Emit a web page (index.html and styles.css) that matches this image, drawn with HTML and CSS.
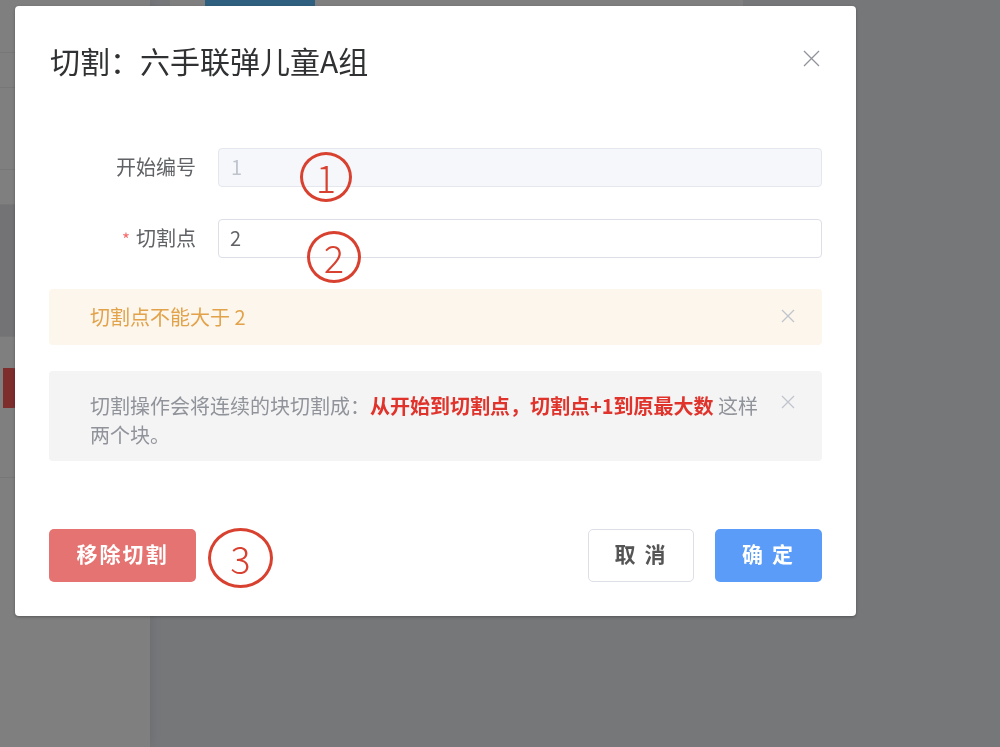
FILE: index.html
```html
<!DOCTYPE html>
<html>
<head>
  <meta charset="utf-8">
  <title>切割</title>
  <link rel="stylesheet" href="styles.css">
</head>
<body>
  <!-- page behind the dialog -->
  <div class="page">
    <aside class="sidebar">
      <div class="side-row h53"></div>
      <div class="side-row h35"></div>
      <div class="side-row h82"></div>
      <div class="side-row h35"></div>
      <div class="side-row h132 shaded"></div>
      <div class="side-row h141">
        <span class="side-btn"></span>
      </div>
    </aside>
    <main class="main">
      <div class="top-card">
        <span class="top-btn"></span>
      </div>
    </main>
  </div>

  <div class="mask"></div>

  <!-- Dialog -->
  <div class="dialog">
    <div class="dialog-header">
      <span class="dialog-title">切割：六手联弹儿童A组</span>
      <button class="close-btn" aria-label="关闭">
        <svg width="17" height="17" viewBox="0 0 17 17"><path d="M1 1 L16 16 M16 1 L1 16" stroke="#909399" stroke-width="1.3" fill="none"/></svg>
      </button>
    </div>

    <div class="dialog-body">
      <div class="form-item">
        <label class="form-label">开始编号</label>
        <input class="input is-disabled" type="text" value="1" disabled>
      </div>
      <div class="form-item">
        <label class="form-label"><span class="required">*</span>切割点</label>
        <input class="input" type="text" value="2">
      </div>

      <div class="alert alert-warning">
        <span class="alert-text">切割点不能大于 2</span>
        <svg class="alert-close" width="14" height="14" viewBox="0 0 14 14"><path d="M1 1 L13 13 M13 1 L1 13" stroke="#c0c4cc" stroke-width="1.3" fill="none"/></svg>
      </div>

      <div class="alert alert-info">
        <p class="alert-text">切割操作会将连续的块切割成：<b class="hl">从开始到切割点，切割点+1到原最大数</b> 这样两个块。</p>
        <svg class="alert-close" width="14" height="14" viewBox="0 0 14 14"><path d="M1 1 L13 13 M13 1 L1 13" stroke="#c0c4cc" stroke-width="1.3" fill="none"/></svg>
      </div>
    </div>

    <div class="dialog-footer">
      <div class="footer-left">
        <button class="btn btn-danger">移除切割</button>
        <span class="mark mark-3">3</span>
      </div>
      <div class="footer-right">
        <button class="btn btn-default">取 消</button>
        <button class="btn btn-primary">确 定</button>
      </div>
    </div>

    <!-- hand-drawn annotations -->
    <span class="mark mark-1">1</span>
    <span class="mark mark-2">2</span>
  </div>
</body>
</html>
```
FILE: styles.css
```css
* { box-sizing: border-box; }
html, body { margin: 0; width: 1000px; height: 747px; overflow: hidden; }
body { font-family: "Noto Sans CJK SC", "Noto Sans", sans-serif; background: #eceef3; }

/* background page */
.page { display: flex; height: 747px; }
.sidebar { width: 150px; background: #fff; display: flex; flex-direction: column; box-shadow: 2px 0 10px rgba(0,0,0,.08); }
.side-row { border-bottom: 1px solid #efefef; }
.h53 { height: 53px; }
.h35 { height: 35px; }
.h82 { height: 82px; }
.h132 { height: 132px; }
.h141 { height: 141px; padding: 31px 0 0 3px; }
.shaded { background: #e7e7eb; }
.side-btn { display: block; width: 14px; height: 40px; background: #fd5a5a; border-radius: 0 4px 4px 0; }
.main { flex: 1; padding-left: 20px; }
.top-card { width: 573px; height: 6px; background: #fff; padding-left: 35px; }
.top-btn { display: block; width: 110px; height: 6px; background: #5ebefc; }

.mask { position: fixed; left: 0; top: 0; right: 0; bottom: 0; background: rgba(0,0,0,.5); z-index: 10; }

/* dialog */
.dialog {
  position: absolute; left: 15px; top: 6px; width: 841px; height: 610px; z-index: 11;
  background: #fff; border-radius: 4px; padding: 0 34px;
  box-shadow: 0 1px 3px rgba(0,0,0,.3);
}
.dialog-header { display: flex; justify-content: space-between; align-items: center; padding-top: 39px; }
.dialog-title { font-size: 30px; line-height: 30px; color: #303133; padding-left: 1px; }
.close-btn { border: none; background: none; padding: 0; margin: -3px 2px 0 0; width: 17px; height: 17px; display: flex; cursor: pointer; }

.dialog-body { padding-top: 73px; }
.form-item { display: flex; margin-bottom: 32px; }
.form-item + .form-item { margin-bottom: 31px; }
.form-label { width: 169px; padding-right: 22px; text-align: right; font-size: 20px; line-height: 38px; color: #606266; }
.required { color: #f56c6c; margin-right: 6px; font-size: 17px; }
.input {
  flex: 1; height: 39px; border: 1px solid #dcdfe6; border-radius: 4px;
  padding: 0 12px 2px 11px; font-family: inherit; font-size: 20px; color: #606266; background: #fff; outline: none;
}
.input.is-disabled { background: #f5f7fa; border-color: #e4e7ed; color: #c0c4cc; padding-left: 12px; }

.alert { display: flex; border-radius: 4px; font-size: 20px; padding: 0 27px 0 41px; }
.alert-text { flex: 1; margin: 0 10px 0 0; }
.alert-warning { height: 56px; align-items: center; background: #fdf6ec; color: #e2a24a; padding-bottom: 2px; }
.alert-info { margin-top: 26px; height: 90px; padding-top: 20px; align-items: flex-start; background: #f4f4f5; color: #909399; line-height: 29px; }
.alert-info .alert-close { margin-top: 4px; }
.hl { color: #e0332b; font-weight: 700; }

.dialog-footer { display: flex; justify-content: space-between; align-items: flex-start; margin-top: 68px; }
.footer-left, .footer-right { display: flex; align-items: flex-start; }
.footer-right { gap: 21px; }
.btn {
  height: 53px; border-radius: 5px; font-family: inherit; font-size: 21px; font-weight: 700;
  letter-spacing: 2px; border: 1px solid transparent; cursor: pointer; padding: 0 0 5px;
}
.btn-danger { width: 147px; background: #e47371; color: #fff; }
.btn-default { width: 106px; background: #fff; border-color: #dcdfe6; color: #555; }
.btn-primary { width: 107px; background: #5a9cf7; color: #fff; }

/* red circled annotations */
.mark {
  display: flex; align-items: center; justify-content: center;
  border: 3px solid #d8412f; border-radius: 50%; color: #d8412f;
  font-size: 38px; font-weight: 300; line-height: 1;
}
.mark-1 { position: absolute; left: 285px; top: 146px; width: 52px; height: 50px; }
.mark-2 { position: absolute; left: 292px; top: 225px; width: 54px; height: 52px; }
.mark-3 { width: 65px; height: 60px; margin: -1px 0 0 12px; }
```
